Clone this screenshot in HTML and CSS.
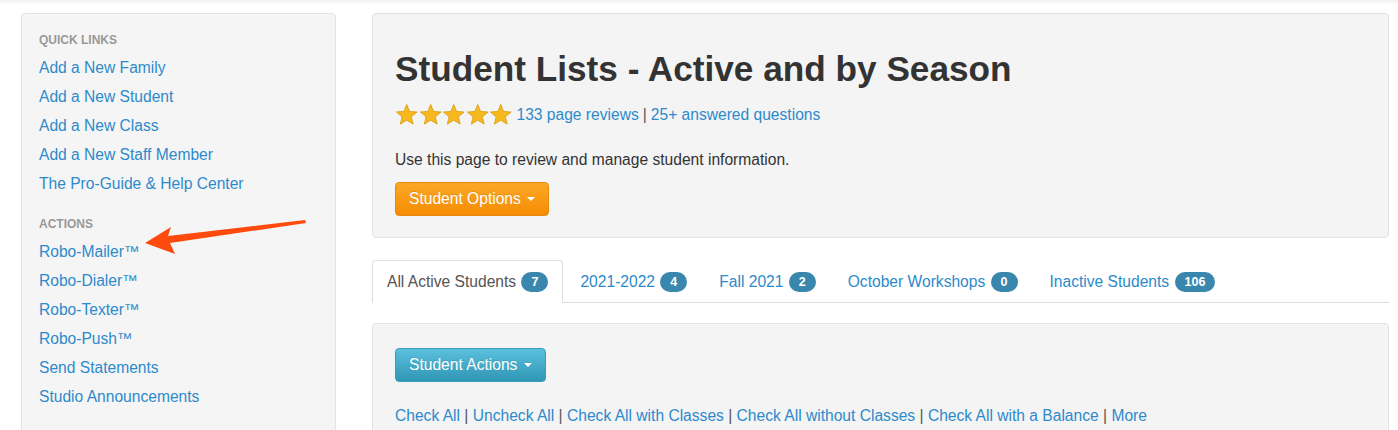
FILE: index.html
```html
<!DOCTYPE html>
<html lang="en">
<head>
    <meta charset="UTF-8">
    <title>Student Lists</title>
    <link rel="stylesheet" href="styles.css">
</head>
<body>
    <div class="topbar"></div>
    <div class="page">
        <!-- Sidebar -->
        <div class="sidebar">
            <div class="nav-header">QUICK LINKS</div>
            <a href="#">Add a New Family</a>
            <a href="#">Add a New Student</a>
            <a href="#">Add a New Class</a>
            <a href="#">Add a New Staff Member</a>
            <a href="#">The Pro-Guide &amp; Help Center</a>
            <div class="nav-header second">ACTIONS</div>
            <a href="#">Robo-Mailer™</a>
            <a href="#">Robo-Dialer™</a>
            <a href="#">Robo-Texter™</a>
            <a href="#">Robo-Push™</a>
            <a href="#">Send Statements</a>
            <a href="#">Studio Announcements</a>

            <svg class="arrow" width="170" height="45" viewBox="0 0 170 45">
                <polygon points="4,27 30,11 27,20 164,4 165,7 29,27 34,38" fill="#ff4a0e"/>
            </svg>
        </div>

        <!-- Main -->
        <div class="main">
            <div class="well header-card">
                <h1>Student Lists - Active and by Season</h1>
                <div class="rating">
                    <span class="stars">
                        <svg viewBox="0 0 24 24"><polygon points="12,1.5 14.9,8.6 22.6,9.2 16.7,14.1 18.6,21.6 12,17.5 5.4,21.6 7.3,14.1 1.4,9.2 9.1,8.6"/></svg>
                        <svg viewBox="0 0 24 24"><polygon points="12,1.5 14.9,8.6 22.6,9.2 16.7,14.1 18.6,21.6 12,17.5 5.4,21.6 7.3,14.1 1.4,9.2 9.1,8.6"/></svg>
                        <svg viewBox="0 0 24 24"><polygon points="12,1.5 14.9,8.6 22.6,9.2 16.7,14.1 18.6,21.6 12,17.5 5.4,21.6 7.3,14.1 1.4,9.2 9.1,8.6"/></svg>
                        <svg viewBox="0 0 24 24"><polygon points="12,1.5 14.9,8.6 22.6,9.2 16.7,14.1 18.6,21.6 12,17.5 5.4,21.6 7.3,14.1 1.4,9.2 9.1,8.6"/></svg>
                        <svg viewBox="0 0 24 24"><polygon points="12,1.5 14.9,8.6 22.6,9.2 16.7,14.1 18.6,21.6 12,17.5 5.4,21.6 7.3,14.1 1.4,9.2 9.1,8.6"/></svg>
                    </span>
                    <a href="#">133 page reviews</a> <span class="sep">|</span> <a href="#">25+ answered questions</a>
                </div>
                <p class="intro">Use this page to review and manage student information.</p>
                <button class="btn btn-orange">Student Options <span class="caret"></span></button>
            </div>

            <ul class="tabs">
                <li class="active"><a href="#">All Active Students <span class="badge">7</span></a></li>
                <li><a href="#">2021-2022 <span class="badge">4</span></a></li>
                <li><a href="#">Fall 2021 <span class="badge">2</span></a></li>
                <li><a href="#">October Workshops <span class="badge">0</span></a></li>
                <li><a href="#">Inactive Students <span class="badge">106</span></a></li>
            </ul>

            <div class="well list-card">
                <button class="btn btn-info">Student Actions <span class="caret"></span></button>
                <div class="check-links">
                    <a href="#">Check All</a> <span class="sep">|</span>
                    <a href="#">Uncheck All</a> <span class="sep">|</span>
                    <a href="#">Check All with Classes</a> <span class="sep">|</span>
                    <a href="#">Check All without Classes</a> <span class="sep">|</span>
                    <a href="#">Check All with a Balance</a> <span class="sep">|</span>
                    <a href="#">More</a>
                </div>
            </div>
        </div>
    </div>
</body>
</html>
```

FILE: styles.css
```css
/* General */
body {
    margin: 0;
    font-family: "Liberation Sans", Arial, sans-serif;
    font-size: 15.6px;
    color: #333;
    background: #fff;
    overflow: hidden;
}

a {
    color: #2d8acb;
    text-decoration: none;
}

.topbar {
    height: 4px;
    background: linear-gradient(#f2f2f2, #fbfbfb);
}

.page {
    display: flex;
    align-items: flex-start;
    gap: 36px;
    padding: 9px 9px 0 21px;
}

/* Sidebar */
.sidebar {
    position: relative;
    width: 279px;
    flex: none;
    background: #f5f5f5;
    border: 1px solid #e3e3e3;
    border-radius: 4px;
    padding: 18px 17px 40px 17px;
    display: flex;
    flex-direction: column;
}

.sidebar a {
    line-height: 29px;
}

.nav-header {
    font-size: 12px;
    font-weight: bold;
    color: #999;
    line-height: 16px;
    margin-bottom: 5px;
}

.nav-header.second {
    margin-top: 18px;
}

.arrow {
    position: absolute;
    left: 119px;
    top: 202px;
}

/* Main */
.main {
    flex: 1;
    min-width: 0;
}

.well {
    background: #f4f4f4;
    border: 1px solid #e3e3e3;
    border-radius: 4px;
}

.header-card {
    padding: 33px 22px 21px 22px;
}

h1 {
    margin: 0;
    font-size: 35.2px;
    line-height: 44px;
    font-weight: bold;
    color: #333;
}

.rating {
    display: flex;
    align-items: center;
    gap: 4px;
    margin-top: 12px;
    height: 24px;
}

.stars {
    display: flex;
}

.stars svg {
    width: 23.5px;
    height: 23.5px;
    fill: #f7b91d;
    stroke: #d69a0c;
    stroke-width: 0.8;
}

.rating .sep {
    color: #555;
}

.intro {
    margin: 23px 0 12px 0;
    line-height: 20px;
}

.btn {
    font-family: inherit;
    font-size: 15.6px;
    color: #fff;
    border-radius: 4px;
    padding: 0 13px;
    height: 34px;
    cursor: pointer;
    text-shadow: 0 -1px 0 rgba(0, 0, 0, 0.1);
}

.btn-orange {
    background: linear-gradient(#fba826, #f68c02);
    border: 1px solid #e3890e;
}

.btn-info {
    background: linear-gradient(#5bc0de, #2f96b4);
    border: 1px solid #3a9dbb;
}

.caret {
    display: inline-block;
    width: 0;
    height: 0;
    border-left: 4px solid transparent;
    border-right: 4px solid transparent;
    border-top: 4px solid #fff;
    vertical-align: middle;
    margin-left: 2px;
    margin-top: -2px;
}

/* Tabs */
.tabs {
    list-style: none;
    margin: 22px 0 20px 0;
    padding: 0;
    display: flex;
    border-bottom: 1px solid #ddd;
    height: 42px;
}

.tabs li {
    margin-bottom: -1px;
}

.tabs li a {
    display: block;
    height: 42px;
    line-height: 42px;
    padding: 0 14px;
    margin-right: 2px;
    border: 1px solid transparent;
    border-bottom: none;
    border-radius: 4px 4px 0 0;
    box-sizing: border-box;
}

.tabs li.active a {
    background: #fff;
    border-color: #ddd;
    color: #555;
    height: 43px;
}

.badge {
    display: inline-block;
    background: #3a87ad;
    color: #fff;
    font-size: 12.5px;
    font-weight: bold;
    line-height: 20px;
    padding: 0 10px;
    border-radius: 10px;
    vertical-align: 1px;
    margin-left: 1px;
}

/* List card */
.list-card {
    padding: 24px 22px 40px 22px;
}

.check-links {
    margin-top: 24px;
    line-height: 20px;
}

.check-links .sep {
    color: #555;
}
```
